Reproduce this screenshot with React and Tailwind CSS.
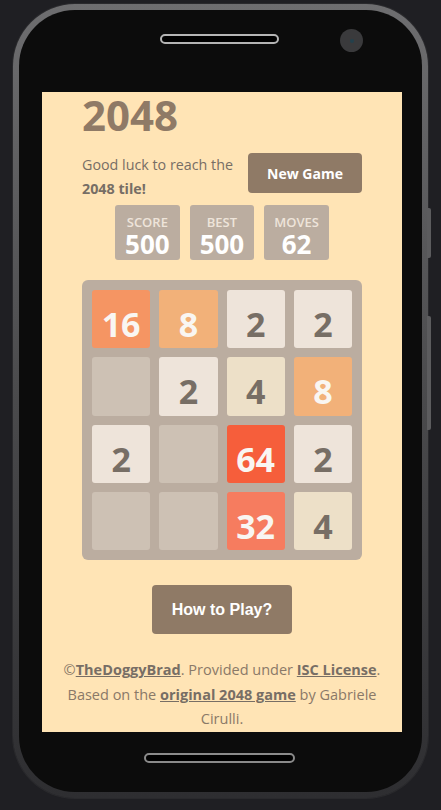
const tiles = [
  [16, 8, 2, 2],
  [0, 2, 4, 8],
  [2, 0, 64, 2],
  [0, 0, 32, 4],
]

const tileStyle = {
  0: "bg-[#cdc1b4]",
  2: "bg-[#eee4da] text-[#776e65]",
  4: "bg-[#ede0c8] text-[#776e65]",
  8: "bg-[#f2b179] text-[#f9f6f2]",
  16: "bg-[#f59563] text-[#f9f6f2]",
  32: "bg-[#f67c5f] text-[#f9f6f2]",
  64: "bg-[#f65e3b] text-[#f9f6f2]",
}

function ScoreBox({ label, value }) {
  return (
    <div className="h-[55px] px-[10px] rounded-[3px] bg-[#bbada0] flex flex-col items-center">
      <span className="mt-[11px] text-[13px] leading-none font-semibold text-[#eee4da]">{label}</span>
      <span className="mt-[2px] text-[26px] leading-[26px] font-bold text-white">{value}</span>
    </div>
  )
}

function Screen() {
  return (
    <div className="ml-[23px] w-[360px] h-[640px] overflow-hidden bg-[#ffe4b5] font-['Open_Sans',sans-serif]">
      <div className="w-[280px] mx-auto">
        <h1 className="mt-[2px] text-[42px] leading-none font-bold text-[#8f7a66]">2048</h1>

        <div className="mt-[17px] flex items-start justify-between">
          <p className="w-[160px] text-[14.3px] leading-[24px] text-[#776e65]">
            Good luck to reach the <b className="font-bold">2048 tile!</b>
          </p>
          <button className="w-[114px] h-[40px] rounded-[4px] bg-[#8f7a66] text-white text-[14px] font-bold">
            New Game
          </button>
        </div>

        <div className="mt-[4px] flex justify-center gap-[10px]">
          <ScoreBox label="SCORE" value="500" />
          <ScoreBox label="BEST" value="500" />
          <ScoreBox label="MOVES" value="62" />
        </div>

        {/* Board */}
        <div className="mt-[20px] w-[280px] h-[280px] p-[10px] rounded-[6px] bg-[#bbada0] grid grid-cols-4 grid-rows-4 gap-[9px]">
          {tiles.flat().map((v, i) => (
            <div
              key={i}
              className={`rounded-[3px] flex items-center justify-center pt-[10px] text-[34px] leading-none font-bold ${tileStyle[v]}`}
            >
              {v > 0 ? v : ""}
            </div>
          ))}
        </div>
      </div>

      <div className="mt-[25px] flex justify-center">
        <button className="w-[140px] h-[49px] rounded-[4px] bg-[#8f7a66] text-white text-[16px] font-bold font-['Liberation_Sans',Arial,sans-serif]">
          How to Play?
        </button>
      </div>

      <p className="mt-[24px] px-[20px] text-center text-[14.5px] leading-[24.5px] text-[#8a7968]">
        ©<a className="font-bold underline text-[#776e65]">TheDoggyBrad</a>. Provided under{" "}
        <a className="font-bold underline text-[#776e65]">ISC License</a>. Based on the{" "}
        <a className="font-bold underline text-[#776e65]">original 2048 game</a> by Gabriele Cirulli.
      </p>
    </div>
  )
}

export default function App() {
  return (
    <div className="w-[441px] h-[810px] bg-[#1f1f23] pt-[4px] overflow-hidden">
      <div className="relative ml-[13px] w-[415px] h-[794px] rounded-[62px] p-[6px] bg-gradient-to-b from-[#6e6e70] via-[#4a4a4c] to-[#2e2e31] shadow-[0_0_0_1px_#2a2a2d]">
        {/* side buttons */}
        <div className="absolute left-[414px] top-[204px] w-[4px] h-[50px] rounded-r-[2px] bg-[#5c5c5e]" />
        <div className="absolute left-[414px] top-[312px] w-[4px] h-[114px] rounded-r-[2px] bg-[#5c5c5e]" />

        <div className="h-full rounded-[56px] bg-[#0c0c0c] flex flex-col">
          <div className="h-[82px] flex items-start">
            <div className="mt-[24px] ml-[141px] w-[119px] h-[10px] rounded-full bg-black border-2 border-[#b4b4b4]" />
            <div className="mt-[19px] ml-[61px] w-[23px] h-[23px] rounded-full bg-[#3a3a3c] flex items-center justify-center">
              <div className="w-[4px] h-[4px] rounded-full bg-[#24404c]" />
            </div>
          </div>

          <Screen />

          <div className="mt-[21px] ml-[125px] w-[151px] h-[10px] rounded-full bg-black border-2 border-[#8a8a8a]" />
        </div>
      </div>
    </div>
  )
}
